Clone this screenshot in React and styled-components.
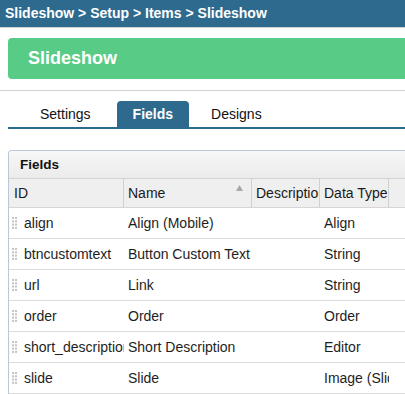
import styled, { createGlobalStyle } from 'styled-components';

const GlobalStyle = createGlobalStyle`
  html, body {
    margin:0;
    padding:0;
    overflow:hidden;
    background:#fff;
    font-family:"Liberation Sans", Arial, sans-serif;
  }
`;

const Page = styled.div`
  width:640px;
`;

const Breadcrumb = styled.div`
  height:27px;
  line-height:26px;
  padding-left:5px;
  background:#2e6a8e;
  border-bottom:1px solid #d3d3d3;
  color:#fff;
  font-size:14px;
  font-weight:bold;
`;

const TitleBar = styled.div`
  margin:10px 8px 0 8px;
  height:41px;
  line-height:41px;
  padding-left:20px;
  border-radius:4px;
  background:#58cc86;
  color:#fff;
  font-size:18px;
  font-weight:bold;
`;

const Rule = styled.div`
  margin-top:11px;
  height:1px;
  background:#d0d0d0;
`;

const TabRow = styled.div`
  display:flex;
  margin:0 8px;
  padding:10px 0 0 16px;
  border-bottom:2px solid #2e6a8e;
`;

const Tab = styled.div`
  height:26px;
  line-height:26px;
  padding:0 16px;
  margin-right:${p => p.$gap || 0}px;
  border-radius:4px 4px 0 0;
  font-size:14px;
  color:${p => (p.$active ? '#fff' : '#111')};
  background:${p => (p.$active ? '#2e6a8e' : 'transparent')};
  font-weight:${p => (p.$active ? 'bold' : 'normal')};
`;

const Panel = styled.div`
  margin:21px 0 0 8px;
  border:1px solid #b9c8d8;
  border-radius:4px 0 0 0;
  border-right:none;
  overflow:hidden;
`;

const PanelHeader = styled.div`
  height:27px;
  line-height:27px;
  padding-left:11px;
  background:linear-gradient(#f7f7f7, #ebebeb);
  border-bottom:1px solid #d3d3d3;
  font-size:13.5px;
  font-weight:bold;
  color:#111;
`;

const Columns = '115px 128px 68px 69px 1fr';

const HeadRow = styled.div`
  display:grid;
  grid-template-columns:${Columns};
  height:28px;
  background:#efefef;
  border-bottom:1px solid #d6d6d6;
`;

const HeadCell = styled.div`
  display:flex;
  justify-content:space-between;
  line-height:28px;
  border-right:1px solid #d0d0d0;
  font-size:14px;
  color:#1a1a1a;
  white-space:nowrap;
  overflow:hidden;
  padding-right:${p => (p.$tight ? '0' : '8px')};
  padding-left:${p => (p.$first ? '5px' : '4px')};
`;

const SortArrow = styled.svg`
  flex:none;
  margin-top:6px;
`;

const Row = styled.div`
  display:grid;
  grid-template-columns:${Columns};
  height:30px;
  border-bottom:1px solid #dcdcdc;
  font-size:14px;
  color:#1e1e1e;
`;

const Cell = styled.div`
  display:flex;
  align-items:center;
  gap:7px;
  padding-left:${p => (p.$first ? '3px' : '4px')};
  white-space:nowrap;
  overflow:hidden;
`;

const Handle = () => (
  <svg width="5" height="12" viewBox="0 0 5 12" style={{ flex: 'none' }}>
    {[0, 3.3, 6.6, 9.9].map(y => (
      <g key={y} fill="#c4c4c4">
        <rect x="0" y={y} width="2" height="2" />
        <rect x="3" y={y} width="2" height="2" />
      </g>
    ))}
  </svg>
);

const fields = [
  ['align', 'Align (Mobile)', '', 'Align'],
  ['btncustomtext', 'Button Custom Text', '', 'String'],
  ['url', 'Link', '', 'String'],
  ['order', 'Order', '', 'Order'],
  ['short_description', 'Short Description', '', 'Editor'],
  ['slide', 'Slide', '', 'Image (Slide)'],
  ['title', 'Title', '', 'String'],
];

const App = () => {
  return <Page>
    <GlobalStyle />
    <Breadcrumb>Slideshow &gt; Setup &gt; Items &gt; Slideshow</Breadcrumb>
    <TitleBar>Slideshow</TitleBar>
    <Rule />
    <TabRow>
      <Tab $gap={10}>Settings</Tab>
      <Tab $gap={6} $active>Fields</Tab>
      <Tab>Designs</Tab>
    </TabRow>
    <Panel>
      <PanelHeader>Fields</PanelHeader>
      <HeadRow>
        <HeadCell $first>ID</HeadCell>
        <HeadCell>
          Name
          <SortArrow width="7" height="6" viewBox="0 0 7 6">
            <path d="M3.5 0 L7 6 L0 6 Z" fill="#a8a8a8" />
          </SortArrow>
        </HeadCell>
        <HeadCell $tight>Description</HeadCell>
        <HeadCell $tight>Data Type</HeadCell>
        <HeadCell />
      </HeadRow>
      {fields.map(f => (
        <Row key={f[0]}>
          <Cell $first><Handle />{f[0]}</Cell>
          <Cell>{f[1]}</Cell>
          <Cell>{f[2]}</Cell>
          <Cell>{f[3]}</Cell>
          <Cell />
        </Row>
      ))}
    </Panel>
  </Page>
}

export default App;
